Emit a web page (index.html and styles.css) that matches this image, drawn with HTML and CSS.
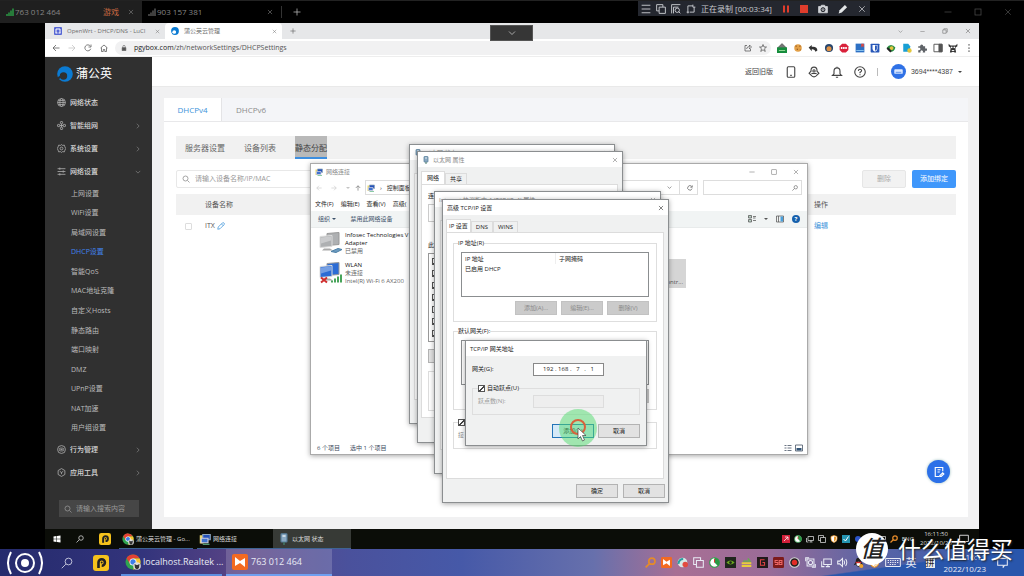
FILE: index.html
```html
<!DOCTYPE html>
<html lang="zh-CN">
<head>
<meta charset="utf-8">
<title>蒲公英云管理</title>
<link rel="stylesheet" href="styles.css">
</head>
<body>
<svg class="defs" aria-hidden="true">
  <symbol id="search" viewBox="0 0 16 16"><circle cx="7" cy="7" r="5"/><path d="M11 11l4 4"/></symbol>
  <symbol id="search-l" viewBox="0 0 16 16"><circle cx="10" cy="6" r="4.5"/><path d="M6.500 9.500L1 15"/></symbol>
  <symbol id="close" viewBox="0 0 16 16"><path d="M2.500 2.500l11 11M13.500 2.500l-11 11"/></symbol>
  <symbol id="right" viewBox="0 0 16 16"><path d="M5 2l6 6-6 6"/></symbol>
  <symbol id="down" viewBox="0 0 16 16"><path d="M2 5l6 6 6-6"/></symbol>
  <symbol id="min" viewBox="0 0 16 16"><path d="M1 8h14"/></symbol>
  <symbol id="max" viewBox="0 0 16 16"><rect x="2" y="2" width="12" height="12"/></symbol>
  <symbol id="restore" viewBox="0 0 16 16"><path d="M2 5h9v9H2zM5 5V2h9v9h-3"/></symbol>
  <symbol id="back" viewBox="0 0 16 16"><path d="M15 8H2M8 2L2 8l6 6"/></symbol>
  <symbol id="fwd" viewBox="0 0 16 16"><path d="M1 8h13M8 2l6 6-6 6"/></symbol>
  <symbol id="up" viewBox="0 0 16 16"><path d="M8 15V2M2 8l6-6 6 6"/></symbol>
  <symbol id="reload" viewBox="0 0 16 16"><path d="M13.500 9.500A6 6 0 1 1 12.500 4M14 1v5H9"/></symbol>
  <symbol id="home" viewBox="0 0 16 16"><path d="M1 8l7-6 7 6M3 7v8h3.500v-4h3v4H13V7"/></symbol>
  <symbol id="lock" viewBox="0 0 16 16"><path d="M3 7h10v8H3z" fill="currentColor"/><path d="M5 7V4a3 3 0 0 1 6 0v3"/></symbol>
  <symbol id="signal" viewBox="0 0 16 16"><path d="M2 16v-4M6 16V9M10 16V5M14 16V1"/></symbol>
  <symbol id="plus" viewBox="0 0 16 16"><path d="M8 1v14M1 8h14"/></symbol>
  <symbol id="globe" viewBox="0 0 16 16"><circle cx="8" cy="8" r="7"/><ellipse cx="8" cy="8" rx="3" ry="7"/><path d="M1 8h14M2.500 4.500h11M2.500 11.500h11"/></symbol>
  <symbol id="mesh" viewBox="0 0 16 16"><rect x="6" y="1" width="4" height="4" rx="1"/><rect x="6" y="11" width="4" height="4" rx="1"/><rect x="1" y="6" width="4" height="4" rx="1"/><rect x="11" y="6" width="4" height="4" rx="1"/><path d="M8 5v6M5 8h6"/></symbol>
  <symbol id="gear" viewBox="0 0 16 16"><path d="M8 1l2 1.500 3-.5 1 3L15.500 8 14 11l-1 3-3-.5L8 15l-2-1.500-3 .5-1-3L.5 8 2 5l1-3 3 .5z"/><circle cx="8" cy="8" r="2.500"/></symbol>
  <symbol id="sliders" viewBox="0 0 16 16"><path d="M1 3h14M1 8h14M1 13h14M5 1v4M11 6v4M5 11v4"/></symbol>
  <symbol id="behave" viewBox="0 0 16 16"><circle cx="8" cy="8" r="7"/><rect x="4" y="5.500" width="8" height="5" rx="2.500"/><path d="M6 8h4"/></symbol>
  <symbol id="tools" viewBox="0 0 16 16"><path d="M8 1l6 3.500v7L8 15l-6-3.500v-7z"/><path d="M5 6l3 2 3-2M8 8v3"/></symbol>
  <symbol id="pgy" viewBox="0 0 16 16"><circle cx="8" cy="8" r="7.800" fill="#0b7bd3" stroke="none"/><circle cx="6.500" cy="10" r="3.700" class="cut"/><path d="M3 10.500l-2.600 3" class="cutline"/></symbol>
  <symbol id="pencil" viewBox="0 0 16 16"><path d="M1.500 14.500l1-4.500 8-8q2-1.500 3.500 0t0 3.500l-8 8zM9 4l3.500 3.500"/></symbol>
  <symbol id="camera" viewBox="0 0 16 16"><path d="M1 4h3l1.500-2h5L12 4h3v10H1z" fill="#d4d6da"/><circle cx="8" cy="9" r="3.200" fill="#24272f" stroke="#24272f"/><circle cx="8" cy="9" r="1.500"/></symbol>
  <symbol id="share" viewBox="0 0 16 16"><path d="M6 3H2v11h11v-4M5 10q1-5 6-5V2l4 4-4 4V7"/></symbol>
  <symbol id="star" viewBox="0 0 16 16"><path d="M8 1l2 5h5l-4 3.500L12.500 15 8 11.500 3.500 15 5 9.500 1 6h5z"/></symbol>
  <symbol id="puzzle" viewBox="0 0 16 16"><path d="M2 5h3a2 2 0 1 1 5 0h3v4a2 2 0 1 1 0 3v3H9a2 2 0 1 0-3 0H2v-4a2 2 0 1 0 0-3z" fill="#5f6368" stroke="none"/></symbol>
  <symbol id="panel" viewBox="0 0 16 16"><path d="M1.500 2h13v12h-13z"/><path d="M9.500 2h5v12h-5z" fill="#555"/></symbol>
  <symbol id="dots" viewBox="0 0 16 16"><path d="M7 2h2v2H7zM7 7h2v2H7zM7 12h2v2H7z" fill="#444" stroke="none"/></symbol>
  <symbol id="cow" viewBox="0 0 16 16"><path d="M1 1l3 3h8l3-3v4l-3 2v3l1 5h-2l-3-1-3 1H3l1-5V7L1 5z" fill="#333" stroke="none"/><circle cx="6" cy="7" r="1.300" fill="#fff" stroke="none"/><circle cx="10" cy="7" r="1.300" fill="#fff" stroke="none"/><path d="M6 12h4" stroke="#fff"/></symbol>
  <symbol id="phone" viewBox="0 0 16 16"><rect x="3" y="1" width="10" height="14" rx="1.500"/><path d="M7 12.500h2"/></symbol>
  <symbol id="qq" viewBox="0 0 16 16"><path d="M4 6a4 4.500 0 0 1 8 0v1l2.500 2.500L12 12q-1.500 2.500-4 2.500T4 12L1.500 9.500 4 7z"/><circle cx="8" cy="6.500" r="1.500"/><path d="M4.500 10h7"/></symbol>
  <symbol id="bell" viewBox="0 0 16 16"><path d="M2 12.500h12l-2-2V7a4 4.500 0 0 0-8 0v3.500zM8 2.500V1M6.500 15h3"/></symbol>
  <symbol id="help" viewBox="0 0 16 16"><circle cx="8" cy="8" r="7"/><path d="M5.800 6.500Q6 4.300 8 4.300t2.200 2Q10 7.500 8 8.500v1.200M8 11v1.200"/></symbol>
  <symbol id="pcs" viewBox="0 0 24 22"><path d="M8 2l12-1v12l-12 1z" fill="currentColor" stroke="#999"/><path d="M1 5l12-1v11L1 16z" fill="currentColor" stroke="#ddd"/><path d="M2 6l10-1v4L2 12z" fill="#fff" fill-opacity=".35" stroke="none"/><path d="M5 17h6l3 2H3z" fill="#aaa" stroke="none"/></symbol>
  <symbol id="net" viewBox="0 0 16 16"><path d="M1 3h5v11H1z" fill="#e8d66c" stroke="none"/><path d="M5 2h10v7H5z" fill="#2451b9" stroke="#8fa6bb"/><path d="M3 7h9v6H3z" fill="#3f72cf" stroke="#ccd"/><path d="M5 15h9" stroke="#6b8"/></symbol>
  <symbol id="plug" viewBox="0 0 16 16"><rect x="4" y="1" width="8" height="11" rx="1" fill="#8aa9c2" stroke="#567d99"/><path d="M6 4h4" stroke="#fff"/><path d="M7 12h2v4H7z" fill="#476" stroke="none"/></symbol>
  <symbol id="chrome" viewBox="0 0 16 16"><g stroke="none"><circle cx="8" cy="8" r="7.500" fill="#2fa44f"/><path d="M1.500 4.200A7.500 7.500 0 0 1 14.600 4.500H8L5 9.700z" fill="#e34133"/><path d="M14.700 4.500A7.500 7.500 0 0 1 8 15.500L11 9.500 8 4.500z" fill="#f8c52e"/><circle cx="8" cy="8" r="3.500" fill="#fff"/><circle cx="8" cy="8" r="2.700" fill="#3b7de8"/><circle cx="12" cy="12" r="3.800" fill="#ddd"/><path d="M9.500 10l2 1h1l2-1-.5 4-2 1.500-2-1.500z" fill="#333"/></g></symbol>
  <symbol id="pot" viewBox="0 0 16 16"><rect width="16" height="16" rx="3" fill="#f6c21c" stroke="none"/><path d="M5.500 13V7.500a3.200 3.200 0 1 1 3.200 3.200" stroke="#222" stroke-width="2.600"/><circle cx="8.700" cy="7.500" r="1" fill="#222" stroke="none"/></symbol>
  <symbol id="sun" viewBox="0 0 16 16"><rect width="16" height="16" rx="2" fill="#f36a21" stroke="none"/><path d="M3 3l5 4 5-3v9L8 9l-5 3z" fill="#fff" stroke="none"/></symbol>
  <symbol id="win" viewBox="0 0 16 16"><path d="M1 3l6-1v5.500H1zM8 2l7-1v6.500H8zM1 8.500h6V14l-6-1zM8 8.500h7V15l-7-1z" fill="#fff" stroke="none"/></symbol>
  <symbol id="stack" viewBox="0 0 16 16"><path d="M5 5h10v10H5zM5 11H1V1h10v4"/></symbol>
  <symbol id="pie" viewBox="0 0 16 16"><circle cx="8" cy="8" r="7" fill="#fff" stroke="#2a9a45"/><path d="M8 8V1a7 7 0 0 1 5 12z" fill="#2a9a45" stroke="none"/><path d="M8 8V3" stroke="#d33"/></symbol>
  <symbol id="shield" viewBox="0 0 16 16"><path d="M8 1l6 2v5q0 5-6 7-6-2-6-7V3z" fill="#fff" stroke="#eb9a2c"/><path d="M8 3v10q4-2 4-5V4z" fill="#eb9a2c" stroke="none"/></symbol>
  <symbol id="pcnet" viewBox="0 0 16 16"><path d="M4 3h11v8H4zM7 14h6M10 11v3M1 6v8h4"/></symbol>
  <symbol id="speaker" viewBox="0 0 16 16"><path d="M1 6h3l4-4v12l-4-4H1zM10 5q2 3 0 6M12.500 3q3.500 5 0 10"/></symbol>
  <symbol id="keyb" viewBox="0 0 24 16"><path d="M1 2h22v12H1z"/><path d="M4 5h16M4 8h16M7 11h10" stroke-dasharray="2 1.500"/></symbol>
  <symbol id="note" viewBox="0 0 16 16"><path d="M1 2h14v10h-4l-2 3v-3H1z"/></symbol>
</svg>

<header class="session-tabs">
  <div class="session active"><svg class="i8 bars green"><use href="#signal"/></svg><span>763 012 464</span><span class="game">游戏</span><button aria-label="关闭会话"><svg class="i6"><use href="#close"/></svg></button></div>
  <div class="session"><svg class="i8 bars"><use href="#signal"/></svg><span>903 157 381</span><button class="push" aria-label="关闭会话"><svg class="i6"><use href="#close"/></svg></button></div>
  <button class="new-session" aria-label="新建会话"><svg class="i8"><use href="#plus"/></svg></button>
  <div class="session-win"><svg class="i8"><use href="#min"/></svg><svg class="i8"><use href="#max"/></svg><svg class="i8"><use href="#close"/></svg></div>
</header>

<main class="remote">
  <section class="browser">
    <div class="tabstrip">
      <div class="btab"><svg class="i8" viewBox="0 0 8 8"><rect width="8" height="8" rx="1" fill="#5666d4" stroke="none"/><path d="M2 6V2h4v4M1.500 6h2M4.500 6h2" stroke="#fff" stroke-width="1"/></svg><span>OpenWrt - DHCP/DNS - LuCI</span><svg class="i5 push"><use href="#close"/></svg></div>
      <div class="btab active"><svg class="i8 on-white"><use href="#pgy"/></svg><span>蒲公英云管理</span><svg class="i5 push"><use href="#close"/></svg></div>
      <svg class="i6 newtab"><use href="#plus"/></svg>
      <div class="bwin"><svg class="i5"><use href="#down"/></svg><svg class="i5"><use href="#min"/></svg><svg class="i6"><use href="#restore"/></svg><svg class="i6"><use href="#close"/></svg></div>
    </div>
    <div class="toolbar">
      <svg class="i8"><use href="#back"/></svg><svg class="i8 dim"><use href="#fwd"/></svg><svg class="i8"><use href="#reload"/></svg><svg class="i8"><use href="#home"/></svg>
      <div class="url"><svg class="i6"><use href="#lock"/></svg><span><b>pgybox.com</b>/zh/networkSettings/DHCPSettings</span><svg class="i8 push"><use href="#share"/></svg><svg class="i8"><use href="#star"/></svg></div>
      <div class="exts">
        <svg viewBox="0 0 16 16"><path d="M1 8l7-7 7 7" fill="#777"/><rect y="7" width="16" height="9" fill="#168d3d" stroke="none"/><path d="M3 12h10" stroke="#9d9"/></svg>
        <svg viewBox="0 0 16 16"><circle cx="8" cy="8" r="6" fill="#e3a047" stroke="none"/><path d="M4 5h2M10 5h2M6 10h2M11 11h1" stroke="#83481b"/></svg>
        <svg viewBox="0 0 16 16"><path d="M1 7l5-4v3q9-1 9 6l-3 2q-1-5-6-4v3z" fill="#333" stroke="none"/></svg>
        <svg viewBox="0 0 16 16"><circle cx="8" cy="8" r="6.500" fill="#27466e" stroke="none"/><circle cx="8" cy="9" r="4" fill="#e09245" stroke="none"/></svg>
        <svg viewBox="0 0 16 16"><path d="M5 1h6l4 4v6l-4 4H5l-4-4V5z" fill="#d9213b" stroke="none"/><path d="M3 8h10" stroke="#fff" stroke-width="3" stroke-dasharray="2.500 1"/></svg>
        <svg viewBox="0 0 16 16"><rect x="1" y="1" width="14" height="14" fill="#2d70c4" stroke="none"/><path d="M10 1h4v6l-2-2-2 2z" fill="#e2483d" stroke="none"/><path d="M2 12h12" stroke="#8ec6ef"/></svg>
        <svg viewBox="0 0 16 16"><rect x="1" y="1" width="14" height="14" rx="1" fill="#2757b8" stroke="none"/><path d="M4 3h8v6q0 3-4 5-4-2-4-5z" fill="#fff" stroke="none"/><path d="M8 4h3v5q0 2-3 3.500z" fill="#2757b8" stroke="none"/></svg>
        <svg viewBox="0 0 16 16"><path d="M1 8q3-5 7-5t7 4q-2 7-7 7z" fill="#2b8f43" stroke="none"/><circle cx="9" cy="8" r="3" fill="#e7c441" stroke="none"/><path d="M2 8l6 6" stroke="#222" stroke-width="3"/></svg>
        <svg viewBox="0 0 16 16"><path d="M2 1h8l3 4v9H2z" fill="#1a9fd4" stroke="none"/><circle cx="12" cy="12" r="3.500" fill="#e4c73e" stroke="none"/></svg>
        <svg><use href="#puzzle"/></svg><svg><use href="#panel"/></svg><svg><use href="#cow"/></svg><svg><use href="#dots"/></svg>
      </div>
    </div>
    <div class="app">
      <aside class="sidebar">
        <div class="brand"><svg class="i16 on-dark"><use href="#pgy"/></svg><span>蒲公英</span></div>
        <nav class="menu">
          <a href="#s1" class="top"><svg class="i9"><use href="#globe"/></svg>网络状态</a>
          <a href="#s2" class="top"><svg class="i9"><use href="#mesh"/></svg>智能组网<svg class="i6 push"><use href="#right"/></svg></a>
          <a href="#s3" class="top"><svg class="i9"><use href="#gear"/></svg>系统设置<svg class="i6 push"><use href="#right"/></svg></a>
          <a href="#s4" class="top"><svg class="i9"><use href="#sliders"/></svg>网络设置<svg class="i6 push"><use href="#down"/></svg></a>
          <div class="sub">
            <a href="#a">上网设置</a><a href="#b">WiFi设置</a><a href="#c">局域网设置</a><a href="#d" class="current">DHCP设置</a><a href="#e">智能QoS</a><a href="#f">MAC地址克隆</a><a href="#g">自定义Hosts</a><a href="#h">静态路由</a><a href="#i">端口映射</a><a href="#j">DMZ</a><a href="#k">UPnP设置</a><a href="#l">NAT加速</a><a href="#m">用户组设置</a>
          </div>
          <a href="#s5" class="top"><svg class="i9"><use href="#behave"/></svg>行为管理<svg class="i6 push"><use href="#right"/></svg></a>
          <a href="#s6" class="top"><svg class="i9"><use href="#tools"/></svg>应用工具<svg class="i6 push"><use href="#right"/></svg></a>
        </nav>
        <label class="side-search"><svg class="i8"><use href="#search"/></svg><input type="text" placeholder="请输入搜索内容" aria-label="搜索"></label>
      </aside>
      <div class="content">
        <div class="topbar"><a href="#old">返回旧版</a><svg class="i12"><use href="#phone"/></svg><svg class="i12"><use href="#qq"/></svg><svg class="i12"><use href="#bell"/></svg><svg class="i12"><use href="#help"/></svg><i class="bar"></i>
          <button class="user"><svg class="avatar" viewBox="0 0 16 16"><circle cx="8" cy="8" r="8" fill="#2f71e6" stroke="none"/><rect x="3.500" y="5.500" width="9" height="5" rx="1" fill="#dce9ff" stroke="none"/><path d="M5 9h6" stroke="#7aa5ee"/></svg><span>3694****4387</span><i class="caret"></i></button></div>
        <div class="card">
          <div class="maintabs"><a href="#v4" class="active">DHCPv4</a><a href="#v6">DHCPv6</a></div>
          <div class="cardbody">
            <div class="subtabs"><a href="#t1">服务器设置</a><a href="#t2">设备列表</a><a href="#t3" class="active">静态分配</a></div>
            <div class="actions"><label class="devsearch"><svg class="i8"><use href="#search"/></svg><input type="text" placeholder="请输入设备名称/IP/MAC" aria-label="搜索设备"></label><button class="del" disabled>删除</button><button class="add">添加绑定</button></div>
            <table class="devices">
              <thead><tr><th class="c1"></th><th>设备名称</th><th class="c3">操作</th></tr></thead>
              <tbody><tr><td class="c1"><input type="checkbox" aria-label="选择 ITX"></td><td><span class="dev">ITX <svg class="i8"><use href="#pencil"/></svg></span></td><td class="c3"><a href="#edit">编辑</a></td></tr></tbody>
            </table>
          </div>
        </div>
      </div>
    </div>
  </section>
  <footer class="inner-task">
    <svg class="i8 start"><use href="#win"/></svg><svg class="i8 find"><use href="#search-l"/></svg><svg class="i12"><use href="#pot"/></svg>
    <div class="task t-chrome"><svg class="i12"><use href="#chrome"/></svg><span>蒲公英云管理 - Go...</span></div>
    <div class="task t-net"><svg class="i12"><use href="#net"/></svg><span>网络连接</span></div>
    <div class="task t-eth"><svg class="i12"><use href="#plug"/></svg><span>以太网 状态</span></div>
    <div class="inner-tray">
      <svg viewBox="0 0 16 16"><rect width="16" height="16" fill="#d3203a" stroke="none"/><path d="M4 12l8-8M6 4h6v6" stroke="#fff"/></svg><svg><use href="#pie"/></svg><svg><use href="#pcnet"/></svg><svg><use href="#stack"/></svg><svg><use href="#shield"/></svg>
      <svg viewBox="0 0 16 16"><rect width="16" height="16" fill="#2495b1" stroke="none"/><path d="M3 8l4 4 6-9" stroke="#fff" stroke-width="2"/></svg><svg viewBox="0 0 16 16"><circle cx="8" cy="8" r="6" fill="#2c54c8" stroke="none"/></svg><svg><use href="#speaker"/></svg><svg><use href="#pcnet"/></svg><svg class="orange"><use href="#search-l"/></svg>
      <span class="eng">ENG</span><time>16:11:50<br>2022/10/23</time><svg class="i10"><use href="#note"/></svg>
    </div>
  </footer>
</main>

<footer class="outer-task">
  <svg class="orb" viewBox="0 0 36 24"><circle cx="18" cy="12" r="9"/><circle cx="18" cy="12" r="3" fill="#fff"/><path d="M4 1q-6 11 0 22M32 1q6 11 0 22"/></svg>
  <svg class="i12 find"><use href="#search-l"/></svg><svg class="i16"><use href="#pot"/></svg>
  <div class="otask o-chrome"><svg class="i16"><use href="#chrome"/></svg><span>localhost.Realtek ...</span></div>
  <div class="otask o-sun"><svg class="i16"><use href="#sun"/></svg><span>763 012 464</span></div>
  <div class="outer-tray">
    <svg class="orange"><use href="#search-l"/></svg><svg><use href="#sun"/></svg>
    <svg viewBox="0 0 16 16"><circle cx="8" cy="8" r="7" fill="#d8e8e6" stroke="none"/><path d="M2 10q1-7 7-7" stroke="#2a9fa0" stroke-width="3"/><circle cx="12" cy="11" r="4" fill="#e34b3f" stroke="none"/></svg>
    <svg><use href="#stack"/></svg><svg><use href="#pie"/></svg>
    <svg viewBox="0 0 16 16"><rect width="16" height="16" fill="#20261d" stroke="none"/><path d="M2 8q6-6 12 0-6 6-12 0z" fill="#6aa71d" stroke="none"/><circle cx="8" cy="8" r="2" fill="#20261d" stroke="none"/></svg>
    <svg viewBox="0 0 16 16"><path d="M1 13h14M1 9h14" stroke="#e8cd3c" stroke-width="3"/><path d="M3 6h10l-3-4" stroke="#63b04e" stroke-width="2"/></svg>
    <svg viewBox="0 0 16 16"><rect width="16" height="16" fill="#211a1b" stroke="none"/><path d="M11 4H5v8h6V8H8" stroke="#d44" stroke-width="1.500"/></svg>
    <svg viewBox="0 0 16 16"><rect width="16" height="16" rx="2" fill="#7d1b1b" stroke="none"/><path d="M7 5H3v3h4v3H3M9 5h4v6H9zM9 8h4" stroke="#e66"/></svg>
    <svg viewBox="0 0 16 16"><circle cx="8" cy="8" r="7" fill="#222" stroke="#ddd"/><circle cx="8" cy="8" r="4" fill="#e22c25" stroke="none"/></svg>
    <svg viewBox="0 0 16 16"><circle cx="8" cy="8" r="3"/><path d="M3 3h10v10H3zM1 6V1h5M10 15h5v-5"/></svg>
    <svg><use href="#pcnet"/></svg><svg><use href="#speaker"/></svg>
    <svg viewBox="0 0 16 16"><path d="M4 7a4 6 0 0 1 8 0l3 5-3-1q-1 3-4 3t-4-3l-3 1z" fill="#222" stroke="none"/><circle cx="8" cy="10" r="3" fill="#fff" stroke="none"/><path d="M4 8h8" stroke="#d33" stroke-width="2"/><circle cx="12" cy="13" r="3" fill="#f0a52e" stroke="none"/></svg>
    <svg><use href="#shield"/></svg>
    <svg class="kb"><use href="#keyb"/></svg><span class="ime">英</span><span class="ime pin">拼</span><time>16:11<br>2022/10/23</time><svg><use href="#note"/></svg>
  </div>
</footer>

<div class="recorder">
  <svg class="i10" viewBox="0 0 16 16"><path d="M1 2h14M1 8h14M1 14h14"/></svg><svg class="i10"><use href="#stack"/></svg><svg class="i10" viewBox="0 0 16 16"><path d="M1 15V1h14M4 15V5h8"/><circle cx="10" cy="10" r="3.500"/><path d="M12 12l3 3"/></svg><svg class="i10" viewBox="0 0 16 16"><path d="M3 15V3h8M6 13h7V5M1 13h4M11 1v4h4"/></svg>
  <span>正在录制 [00:03:34]</span>
  <button aria-label="暂停"><svg class="i8" viewBox="0 0 16 16"><path d="M4 1v14M12 1v14" stroke="#df3d2c" stroke-width="4"/></svg></button><button aria-label="停止"><svg class="i8" viewBox="0 0 16 16"><path d="M0 0h16v16H0z" fill="#df3d2c" stroke="none"/></svg></button><button aria-label="截图"><svg class="i10"><use href="#camera"/></svg></button><button aria-label="画笔"><svg class="i10" viewBox="0 0 16 16"><path d="M1 15l1.500-5L11 1.500 14.500 5 6 13.500z" fill="#e4e6e8" stroke="none"/></svg></button><button aria-label="关闭"><svg class="i8"><use href="#close"/></svg></button>
</div>
<button class="pulldown" aria-label="展开"><svg class="i8"><use href="#down"/></svg></button>
<button class="feedback" aria-label="反馈"><svg class="i12" viewBox="0 0 16 16"><path d="M13 7V2H3v12h5M6 5h4M6 8h3"/><path d="M9 13l4-4 1.500 1.500L11 14H9z"/></svg></button>

<section class="win explorer">
  <div class="title"><svg class="i8"><use href="#net"/></svg><span>网络连接</span><div class="ctl"><svg class="i6"><use href="#min"/></svg><svg class="i6"><use href="#max"/></svg><svg class="i6"><use href="#close"/></svg></div></div>
  <div class="addr"><svg class="i6 dim"><use href="#back"/></svg><svg class="i6 dim"><use href="#fwd"/></svg><i class="caret dim"></i><svg class="i6 go-up"><use href="#up"/></svg>
    <div class="path"><svg class="i8"><use href="#net"/></svg><span>›</span><span>控制面板</span><svg class="i5 push"><use href="#down"/></svg><i></i><svg class="i6"><use href="#reload"/></svg></div>
    <label class="find-box"><input type="text" aria-label="搜索网络连接"><svg class="i6"><use href="#search-l"/></svg></label></div>
  <div class="menubar"><span>文件(F)</span><span>编辑(E)</span><span>查看(V)</span><span>高级(</span></div>
  <div class="cmd"><span>组织 <i class="caret"></i></span><span>禁用此网络设备</span><div class="views"><svg class="i8" viewBox="0 0 16 16"><path d="M1 1h6v5H1zM1 9h6v5H1z" fill="#b9d0c4"/><path d="M10 3h6M10 6h5M10 11h6"/></svg><i class="caret"></i><svg class="i8" viewBox="0 0 16 16"><path d="M1 2h14v12H1z"/><path d="M9 3h5v10H9z" fill="#49a0dc" stroke="none"/><path d="M5 2v12"/></svg><b class="q">?</b></div></div>
  <div class="files">
    <div class="adapter"><svg class="pcs gray" viewBox="0 0 24 22"><use href="#pcs" width="24" height="22"/><path d="M12 20l7-3 4 1-6 3z" fill="#6c9cc0" stroke="#4c7fa6"/></svg><p><strong>Infosec Technologies V<br>Adapter</strong><span>已禁用</span></p></div>
    <div class="adapter"><svg class="pcs blue" viewBox="0 0 24 22"><use href="#pcs" width="24" height="22"/><path d="M2 16l6 5M8 16l-6 5" stroke="#d02e2e" stroke-width="2"/><path d="M13 21v-2M16 21v-4M19 21v-6M22 21v-8" stroke="#48a45a" stroke-width="2"/></svg><p><strong>WLAN</strong><span>未连接</span><span>Intel(R) Wi-Fi 6 AX200</span></p></div>
    <div class="picked">ontr...</div>
  </div>
  <div class="status"><span>6 个项目</span><span>选中 1 个项目</span><svg class="i8 push" viewBox="0 0 16 16"><path d="M1 3h4M1 8h4M1 13h4M7 3h8M7 8h8M7 13h8"/></svg><svg class="i8" viewBox="0 0 16 16"><path d="M1 2h14v12H1z"/><path d="M3 8h10v5H3z" fill="#357" stroke="none"/></svg></div>
</section>

<section class="win ethstatus"><div class="title"><svg class="i8"><use href="#plug"/></svg><span>以太网 状态</span><div class="ctl"><svg class="i6"><use href="#close"/></svg></div></div><div class="pane"></div></section>

<section class="win ethprops">
  <div class="title"><svg class="i8"><use href="#plug"/></svg><span>以太网 属性</span><div class="ctl"><svg class="i6"><use href="#close"/></svg></div></div>
  <div class="wtabs"><button class="active">网络</button><button>共享</button></div>
  <div class="pane"><span>连</span><div class="field"></div><span class="uses">此</span>
    <div class="proto"><label><input type="checkbox" checked></label><label><input type="checkbox" checked></label><label><input type="checkbox" checked></label><label><input type="checkbox" checked></label><label><input type="checkbox"></label><label><input type="checkbox" checked></label><label><input type="checkbox" checked></label></div>
    <button class="wbtn"></button><div class="desc"></div></div>
</section>

<section class="win ipv4"><div class="title"><span>Internet 协议版本 4 (TCP/IPv4) 属性</span><div class="ctl"><svg class="i6"><use href="#close"/></svg></div></div><div class="pane"></div></section>

<section class="win advanced">
  <div class="title"><span>高级 TCP/IP 设置</span><div class="ctl"><svg class="i6"><use href="#close"/></svg></div></div>
  <div class="wtabs"><button class="active">IP 设置</button><button>DNS</button><button>WINS</button></div>
  <div class="pane">
    <fieldset><legend>IP 地址(R)</legend>
      <table class="iplist"><thead><tr><th>IP 地址</th><th>子网掩码</th></tr></thead><tbody><tr><td>已启用 DHCP</td><td></td></tr></tbody></table>
      <div class="row-btn"><button class="wbtn" disabled>添加(A)...</button><button class="wbtn" disabled>编辑(E)...</button><button class="wbtn" disabled>删除(V)</button></div></fieldset>
    <fieldset class="gws"><legend>默认网关(F):</legend><div class="iplist"></div><div class="row-btn"><button class="wbtn" disabled></button><button class="wbtn" disabled></button><button class="wbtn" disabled></button></div></fieldset>
    <fieldset class="metric"><legend><input type="checkbox" checked aria-label="自动跃点"></legend><span>接</span></fieldset>
  </div>
  <div class="foot"><button class="wbtn">确定</button><button class="wbtn">取消</button></div>
</section>

<section class="win gateway">
  <div class="title"><span>TCP/IP 网关地址</span></div>
  <div class="gbody">
    <div class="grow"><label for="gw">网关(G):</label><input id="gw" type="text" value="192 . 168 .   7   .   1"></div>
    <fieldset><legend><label><input type="checkbox" checked>自动跃点(U)</label></legend><div class="grow off"><label for="hop">跃点数(N):</label><input id="hop" type="text" disabled></div></fieldset>
    <div class="foot"><button class="wbtn primary">添加(A)</button><button class="wbtn">取消</button></div>
  </div>
</section>

<svg class="click" viewBox="0 0 40 40"><circle cx="20" cy="20" r="19" fill="#50dc6e" fill-opacity=".5" stroke="none"/><circle cx="20" cy="19" r="7" stroke="#d9623c" stroke-width="2"/><path d="M20 20v11l2.500-2.500 2 4.500 2-1-2-4.500h3.500z" fill="#fff" stroke="#444" stroke-width=".7"/></svg>
<div class="brandmark"><span class="seal">值</span><span>什么值得买</span></div>
</body>
</html>
```

FILE: styles.css
```css
* { box-sizing: border-box; }
html, body { height: 100%; }
body { margin: 0; display: flex; flex-direction: column; overflow: hidden; background: #000; color: #444; font: 7px/10px "Open Sans", "Noto Sans CJK SC", sans-serif; white-space: nowrap; position: relative; }
svg { fill: none; stroke: currentColor; stroke-width: 1.5; flex: none; display: block; width: 8px; height: 8px; }
.defs { position: absolute; width: 0; height: 0; }
button { font: inherit; color: inherit; background: none; border: 0; padding: 0; display: flex; align-items: center; justify-content: center; }
input { font: inherit; color: inherit; border: 0; background: none; padding: 0; margin: 0; min-width: 0; outline: 0; }
input::placeholder { color: #999; }
a { color: inherit; text-decoration: none; }
.i5 { width: 5px; height: 5px; }
.i6 { width: 6px; height: 6px; }
.i8 { width: 8px; height: 8px; }
.i9 { width: 9px; height: 9px; }
.i10 { width: 10px; height: 10px; }
.i12 { width: 12px; height: 12px; }
.i16 { width: 16px; height: 16px; }
.push { margin-left: auto; }
.dim { opacity: .35; }
.bars { stroke-width: 2.5; color: #666; }
.green { color: #2db34c; }
.orange { color: #e58b2a; stroke-width: 2.5; }
.caret { display: inline-block; border: 2px solid transparent; border-top: 2px solid currentColor; border-bottom: 0; vertical-align: middle; }
.on-white { --cut: #fff; }
.on-dark { --cut: #303030; }
.cut { fill: var(--cut); stroke: none; }
.cutline { stroke: var(--cut); stroke-width: 2; }

/* remote session tabs */
.session-tabs { display: flex; flex: none; height: 23px; color: #858585; font-size: 8px; border-top: 1px solid #222; }
.session { flex: none; display: flex; align-items: center; width: 139px; padding: 0 8px 0 6px; gap: 1px; }
.session.active { width: 142px; background: #1f1f1f; }
.game { margin-left: auto; margin-right: 8px; color: #c96a42; }
.new-session { width: 30px; border-left: 1px solid #333; color: #bbb; height: 12px; margin-top: 5px; }
.session-win { margin-left: auto; display: flex; align-items: center; gap: 22px; padding-right: 12px; color: #4a4a4a; }

/* remote screen */
.remote { flex: 1; min-height: 0; display: flex; flex-direction: column; margin: 0 45px; }
.browser { flex: 1; min-height: 0; display: flex; flex-direction: column; background: #fff; }
.tabstrip { flex: none; height: 16px; display: flex; align-items: center; background: #e6e7e9; color: #6d6d6d; font-size: 6px; }
.btab { width: 120px; height: 16px; padding: 0 5px 0 9px; display: flex; align-items: center; gap: 5px; }
.btab.active { width: 117px; background: #fff; border-radius: 4px 4px 0 0; padding-left: 6px; }
.newtab { margin-left: 8px; color: #555; }
.bwin { margin-left: auto; display: flex; align-items: center; gap: 17px; padding-right: 8px; }
.toolbar { flex: none; height: 18px; display: flex; align-items: center; gap: 8px; padding-left: 7px; border-bottom: 1px solid #eee; color: #555; }
.url { flex: 1; height: 14px; border-radius: 7px; background: #f1f1f2; display: flex; align-items: center; gap: 7px; padding: 0 4px 0 6px; margin-left: -1px; }
.url b { font-weight: 400; color: #222; }
.exts { display: flex; justify-content: space-between; width: 202px; padding-right: 5px; margin-left: -2px; }
.exts svg { width: 10px; height: 10px; }
.app { flex: 1; min-height: 0; display: flex; }

.sidebar { flex: none; width: 107px; background: #303030; color: #d6d6d6; display: flex; flex-direction: column; padding-bottom: 12px; }
.brand { flex: none; height: 34px; display: flex; align-items: center; gap: 3px; padding-left: 12px; font-size: 12px; color: #fff; }
.menu { flex: 1; min-height: 0; display: flex; flex-direction: column; }
.top { flex: none; height: 23px; display: flex; align-items: center; padding: 0 11px 0 12px; font-weight: 500; }
.top .i9 { margin-right: 4px; color: #aaa; }
.top .push { color: #999; }
.sub { flex: 1; min-height: 0; display: grid; grid-auto-rows: 1fr; align-items: center; padding: 1px 0 0 26px; color: #bcbcbc; }
.sub .current { color: #4184ef; }
.side-search { margin: 16px 13px 0 14px; height: 17px; background: #464646; display: flex; align-items: center; gap: 4px; padding: 0 5px; color: #999; }
.side-search input { width: 100%; }

.content { flex: 1; min-width: 0; background: #f1f1f2; display: flex; flex-direction: column; }
.topbar { flex: none; height: 30px; background: #fff; display: flex; align-items: center; justify-content: flex-end; gap: 11px; padding-right: 17px; border-bottom: 1px solid #e9e9e9; color: #444; }
.topbar a { margin-right: 1px; }
.bar { height: 8px; border-left: 1px solid #bbb; }
.user { gap: 5px; margin-left: 2px; font-family: "Liberation Sans", sans-serif; }
.avatar { width: 15px; height: 15px; }
.card { flex: 1; margin: 11px 11px 12px 12px; background: #fff; }
.maintabs { height: 24px; display: flex; background: #f4f5f8; border-bottom: 1px solid #e8e8ea; color: #8c8c8c; font-size: 8px; line-height: 24px; }
.maintabs a { width: 58px; text-align: center; }
.maintabs .active { background: #fff; color: #3d94da; border-right: 1px solid #e4e4e6; }
.cardbody { padding: 14px 12px; }
.subtabs { display: flex; height: 23px; background: #f1f1f1; font-size: 8px; line-height: 23px; gap: 19px; padding-left: 9px; color: #666; }
.subtabs .active { background: #b9b9b9; border-bottom: 2px solid #3e8fe0; color: #444; }
.actions { display: flex; gap: 6px; margin-top: 11px; height: 18px; }
.devsearch { width: 240px; margin-right: auto; border: 1px solid #e8e8e8; border-radius: 2px; display: flex; align-items: center; gap: 5px; padding: 0 5px; color: #888; }
.devsearch input { width: 100%; }
.actions button { width: 44px; border-radius: 2px; }
.del { background: #f2f2f2; border: 1px solid #e6e6e6; color: #aaa; }
.add { background: #3f97fb; color: #fff; }
.devices { width: 100%; border-collapse: collapse; margin-top: 6px; color: #555; }
.devices th { background: #f1f1f1; height: 21px; font-weight: 400; text-align: left; padding: 0; }
.devices td { height: 22px; padding: 0; }
.devices .c1 { width: 29px; padding-left: 9px; }
.devices .c3 { width: 142px; }
.devices a { color: #3d94da; }
.devices input { appearance: none; display: block; width: 7px; height: 7px; border: 1px solid #ddd; border-radius: 1px; }
.dev { display: flex; align-items: center; gap: 2px; }
.dev svg { color: #3d94da; }

.inner-task { flex: none; height: 20px; background: #0b0d08; display: flex; align-items: center; color: #ddd; padding-left: 8px; font-size: 6px; }
.inner-task .find { margin: 0 15px 0 15px; }
.task { height: 20px; display: flex; align-items: center; gap: 2px; border-bottom: 1px solid #3e6393; }
.t-chrome { width: 74px; margin-left: 8px; padding-left: 3px; gap: 2px; }
.t-net { width: 76px; margin-left: 4px; padding-left: 2px; }
.t-eth { width: 78px; background: #373a36; padding-left: 5px; }
.inner-tray { margin-left: auto; display: flex; align-items: center; gap: 4px; padding-right: 10px; }
.inner-tray time { text-align: center; line-height: 9px; width: 36px; margin-right: 1px; }

.outer-task { flex: none; height: 27px; display: flex; align-items: center; color: #e9ebf5; font-size: 9px; background: linear-gradient(172deg, transparent 60%, #2956ac 62%) 700px 0 / 324px 27px no-repeat, linear-gradient(90deg, #252b6d, #33347c 14%, #5b4586 24%, #4a519c 34%, #4659a8 45%, #6770ac 58%, #a86f94 66%, #9a6c98 75%, #5b65a5 85%, #2c57af); }
.orb { width: 36px; height: 24px; margin-left: 7px; stroke: #fff; stroke-width: 2; }
.outer-task .find { margin: 0 20px 0 18px; stroke-width: 1; }
.otask { height: 27px; display: flex; align-items: center; gap: 3px; }
.o-chrome { width: 101px; margin-left: 12px; padding-left: 4px; gap: 2px; border-bottom: 2px solid #5d8ee0; }
.o-sun { width: 106px; margin-left: 4px; padding-left: 6px; background: rgba(255, 255, 255, .17); border-bottom: 2px solid #6f9ff0; }
.outer-tray { margin-left: auto; display: flex; align-items: center; gap: 5px; padding-right: 16px; }
.outer-tray svg { width: 11px; height: 11px; }
.outer-tray .kb { width: 16px; }
.ime { font-size: 11px; }
.pin { font-size: 9px; background: #eee; color: #222; line-height: 10px; margin-right: 4px; margin-left: 4px; }
.outer-tray time { font-size: 8px; line-height: 12px; text-align: right; margin-right: 6px; }

/* overlays */
.recorder { position: absolute; left: 638px; top: 1px; height: 15px; background: #24272f; color: #c8cace; display: flex; align-items: center; gap: 5px; padding: 0 4px 0 3px; font-size: 8px; }
.recorder button { margin-left: 5px; }
.pulldown { position: absolute; left: 490px; top: 25px; width: 43px; height: 16px; background: #363636; border: 1px solid #555; color: #ccc; }
.feedback { position: absolute; right: 74px; bottom: 93px; width: 23px; height: 23px; border-radius: 50%; background: #2c70e8; color: #fff; box-shadow: 0 0 3px #9bb; }
.click { position: absolute; left: 558px; top: 408px; width: 40px; height: 40px; }
.brandmark { position: absolute; right: 11px; bottom: 9px; display: flex; align-items: center; gap: 10px; color: #fff; font-size: 23px; line-height: 36px; text-shadow: 1px 1px 2px #222; }
.seal { width: 32px; height: 32px; border-radius: 50%; background: #fff; color: #222; text-align: center; line-height: 31px; font-weight: 500; font-style: italic; text-shadow: none; }

/* windows */
.win { position: absolute; background: #f0f1f1; border: 1px solid #8b8e90; box-shadow: 0 1px 5px rgba(0, 0, 0, .35); display: flex; flex-direction: column; overflow: hidden; color: #222; font-size: 6px; }
.title { flex: none; height: 15px; background: #fff; display: flex; align-items: center; gap: 3px; padding: 0 4px; color: #888; }
.ctl { margin-left: auto; display: flex; gap: 16px; color: #777; }
.pane { flex: 1; background: #fff; border: 1px solid #dcdcdc; }
.wtabs { display: flex; align-items: flex-end; padding-left: 3px; height: 17px; }
.wtabs button { height: 11px; padding: 0 4px; border: 1px solid #dcdcdc; border-bottom: 0; }
.wtabs .active { height: 13px; background: #fff; padding: 0 2px; }
.wbtn { width: 42px; height: 14px; background: #e2e2e2; border: 1px solid #b3b3b3; }
.wbtn:disabled { background: #cbcbcb; border-color: #c2c2c2; color: #8a8a8a; }
.win fieldset { margin: 0; border: 1px solid #dedede; padding: 0 7px; min-width: 0; }
.win legend { padding: 0; margin-left: -3px; }
.win legend label { display: flex; align-items: center; gap: 2px; }
.win input[type=checkbox] { appearance: none; display: block; width: 7px; height: 7px; border: 1px solid #555; background: #fff; flex: none; }
.win input[type=checkbox]:checked { background: linear-gradient(135deg, transparent 48%, #444 48% 66%, transparent 66%) #fff; }

.explorer { left: 310px; top: 163px; width: 498px; height: 292px; background: #fff; border-color: #aaa; }
.explorer .title { padding-right: 8px; }
.addr { display: flex; align-items: center; height: 17px; padding: 0 5px; gap: 9px; color: #555; }
.go-up { margin-left: -4px; }
.path { flex: 1; height: 15px; border: 1px solid #ddd; display: flex; align-items: center; gap: 5px; padding: 0 4px 0 1px; color: #333; margin-left: -5px; }
.path i { height: 13px; border-left: 1px solid #ddd; margin: 0 2px; }
.find-box { width: 99px; height: 15px; border: 1px solid #ddd; display: flex; align-items: center; padding-right: 3px; margin-left: -4px; }
.find-box input { flex: 1; }
.menubar { display: flex; gap: 7px; padding-left: 4px; height: 13px; align-items: center; line-height: 13px; margin-top: 2px; }
.cmd { display: flex; height: 17px; align-items: center; background: #f1f4f4; padding: 0 7px; gap: 15px; color: #3c5069; border-bottom: 1px solid #e8ebeb; }
.views { margin-left: auto; display: flex; gap: 8px; align-items: center; color: #555; }
.q { width: 8px; height: 8px; border-radius: 50%; background: #1660ac; color: #fff; text-align: center; line-height: 8px; }
.files { flex: 1; position: relative; padding: 3px 8px; line-height: 8px; }
.adapter { display: flex; gap: 2px; height: 30px; color: #666; }
.adapter p { margin: 0; }
.adapter strong { font-weight: 400; color: #111; }
.adapter span, .adapter strong { display: block; }
.pcs { width: 24px; height: 23px; stroke-width: 1; }
.gray { color: #aeb0b2; }
.blue { color: #2c6cd5; }
.picked { position: absolute; left: 330px; top: 31px; width: 45px; height: 29px; background: #d5d5d5; color: #555; text-align: right; padding: 19px 3px 0 0; }
.status { display: flex; height: 12px; align-items: center; gap: 10px; padding: 0 4px 0 6px; color: #3c4a5c; }
.status svg + svg { margin-left: -7px; }

.ethstatus { left: 409px; top: 144px; width: 206px; height: 280px; }
.ethstatus .pane { margin: 13px 4px 23px; }
.ethprops { left: 417px; top: 151px; width: 206px; height: 292px; }
.ethprops .wtabs .active { padding: 0 5px; }
.ethprops .pane { margin: 0 4px 24px 3px; padding: 6px; display: flex; flex-direction: column; }
.field { flex: none; height: 18px; border: 1px solid #ccc; margin-top: 3px; }
.uses { margin-top: 18px; }
.proto { flex: none; height: 89px; border: 1px solid #999; margin: 3px 0 7px; padding: 4px 3px; display: flex; flex-direction: column; gap: 5px; }
.proto label { display: flex; }
.desc { border: 1px solid #ddd; flex: 1; margin-top: 8px; }
.ipv4 { left: 434px; top: 191px; width: 227px; height: 283px; }
.ipv4 .pane { margin: 13px 5px 23px; }
.advanced { left: 442px; top: 199px; width: 227px; height: 304px; }
.advanced .title, .gateway .title { color: #222; }
.advanced .ctl { color: #222; }
.advanced .pane { margin: 0 4px 0 3px; padding: 5px 6px 0; }
.advanced .wtabs button { padding: 0 4px; }
.advanced .wtabs .active { padding: 0 2px; }
.iplist { width: 100%; height: 45px; border: 1px solid #8b8e90; border-spacing: 0; table-layout: fixed; background: #fff; }
.iplist th, .iplist td { height: 11px; text-align: left; font-weight: 400; padding: 0 3px; }
.iplist tbody td { vertical-align: top; }
.iplist th:last-child { border-left: 1px solid #eee; }
.advanced fieldset { margin-bottom: 4px; height: 84px; padding-top: 4px; }
.advanced .gws { margin-bottom: 9px; }
.row-btn { display: flex; gap: 4px; justify-content: flex-end; margin-top: 4px; }
.advanced .metric { height: 30px; color: #888; padding-left: 4px; }
.advanced .metric legend { margin-left: 0; }
.foot { display: flex; gap: 5px; justify-content: flex-end; align-items: center; height: 23px; padding-right: 3px; }
.gateway { left: 465px; top: 340px; width: 182px; height: 106px; }
.gbody { padding: 6px 6px 0 6px; }
.grow { display: flex; height: 14px; align-items: center; }
.grow label { width: 61px; }
.grow input { width: 71px; height: 13px; border: 1px solid #888; background: #fff; text-align: center; white-space: pre; }
.gateway fieldset { margin-top: 7px; height: 32px; padding: 1px 4px 0 5px; }
.gateway legend { margin-left: 0; }
.off { color: #999; }
.grow.off label { width: 55px; }
.grow.off input { background: #eee; border-color: #ddd; }
.gateway .foot { padding: 0; margin-top: 4px; gap: 4px; }
.primary { background: #d5e9f7; border: 1px solid #2374b8; }
```
